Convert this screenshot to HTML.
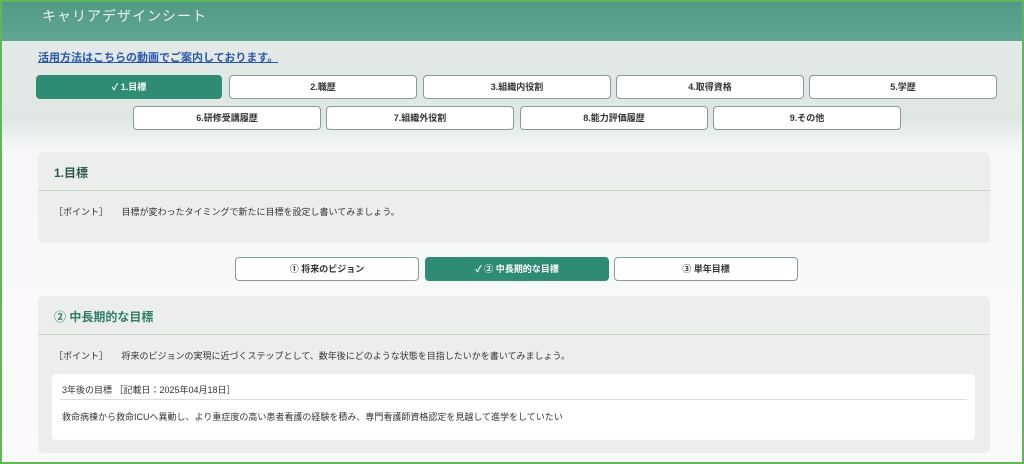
<html><head><style>
body{margin:0;width:1024px;height:464px;overflow:hidden;font-family:"Liberation Sans","Noto Sans CJK JP",sans-serif;}
.wrap{position:absolute;left:0;top:0;width:1024px;height:464px;background:linear-gradient(#e3e9e6 40px,#dfe7e3 120px,#f6f8f7 150px,#f9faf9);}
.frame{position:absolute;left:0;top:0;width:1020px;height:460px;border:2px solid #5fb75a;z-index:5}
.hd{position:absolute;left:0;top:0;width:1024px;height:41px;background:linear-gradient(#4f9a86,#62a595);color:#e8f2ef;font-size:14px;}
.hd span{position:absolute;left:42px;top:6px;letter-spacing:1px}
a{position:absolute;left:38px;top:49px;font-size:11px;color:#2a55b0;font-weight:bold;text-decoration:underline}
.b{position:absolute;height:24px;border:1px solid #8a9a94;border-radius:4px;background:#fff;font-size:9px;color:#333;text-align:center;line-height:22px;font-weight:bold;box-sizing:border-box}
.on{background:#2e8b74;color:#fff;border-color:#2e8b74}
.p{position:absolute;left:38px;width:952px;background:#eceeeb;border-radius:6px}
.t{position:absolute;left:16px;font-size:12px;font-weight:bold;color:#2d5a4c}
.ln{position:absolute;left:0;right:0;border-top:1px solid #c5d5c2}
.s{position:absolute;font-size:9px;color:#333}
</style></head><body><div class="wrap">
<div class="hd"><span>キャリアデザインシート</span></div>
<a>活用方法はこちらの動画でご案内しております。</a>
<div class="b on" style="left:36px;top:75px;width:186px">✓ 1.目標</div>
<div class="b" style="left:229px;top:75px;width:188px">2.職歴</div>
<div class="b" style="left:423px;top:75px;width:188px">3.組織内役割</div>
<div class="b" style="left:616px;top:75px;width:188px">4.取得資格</div>
<div class="b" style="left:809px;top:75px;width:188px">5.学歴</div>
<div class="b" style="left:133px;top:106px;width:188px">6.研修受講履歴</div>
<div class="b" style="left:326px;top:106px;width:188px">7.組織外役割</div>
<div class="b" style="left:520px;top:106px;width:188px">8.能力評価履歴</div>
<div class="b" style="left:713px;top:106px;width:188px">9.その他</div>
<div class="p" style="top:152px;height:91px">
<div class="t" style="top:12px">1.目標</div><div class="ln" style="top:38px"></div>
<div class="s" style="left:16px;top:53px">［ポイント］　　目標が変わったタイミングで新たに目標を設定し書いてみましょう。</div></div>
<div class="b" style="left:235px;top:257px;width:184px">① 将来のビジョン</div>
<div class="b on" style="left:425px;top:257px;width:184px">✓ ② 中長期的な目標</div>
<div class="b" style="left:614px;top:257px;width:184px">③ 単年目標</div>
<div class="p" style="top:296px;height:157px">
<div class="t" style="top:12px;color:#2e7d66">② 中長期的な目標</div><div class="ln" style="top:38px"></div>
<div class="s" style="left:16px;top:53px">［ポイント］　　将来のビジョンの実現に近づくステップとして、数年後にどのような状態を目指したいかを書いてみましょう。</div>
<div style="position:absolute;left:14px;top:78px;width:923px;height:66px;background:#fff;border-radius:4px">
<div class="s" style="left:10px;top:9px">3年後の目標 ［記載日：2025年04月18日］</div>
<div class="ln" style="top:25px;left:8px;right:8px;border-color:#ddd"></div>
<div class="s" style="left:10px;top:36px">救命病棟から救命ICUへ異動し、より重症度の高い患者看護の経験を積み、専門看護師資格認定を見越して進学をしていたい</div>
</div></div>
</div><div class="frame"></div></body></html>
